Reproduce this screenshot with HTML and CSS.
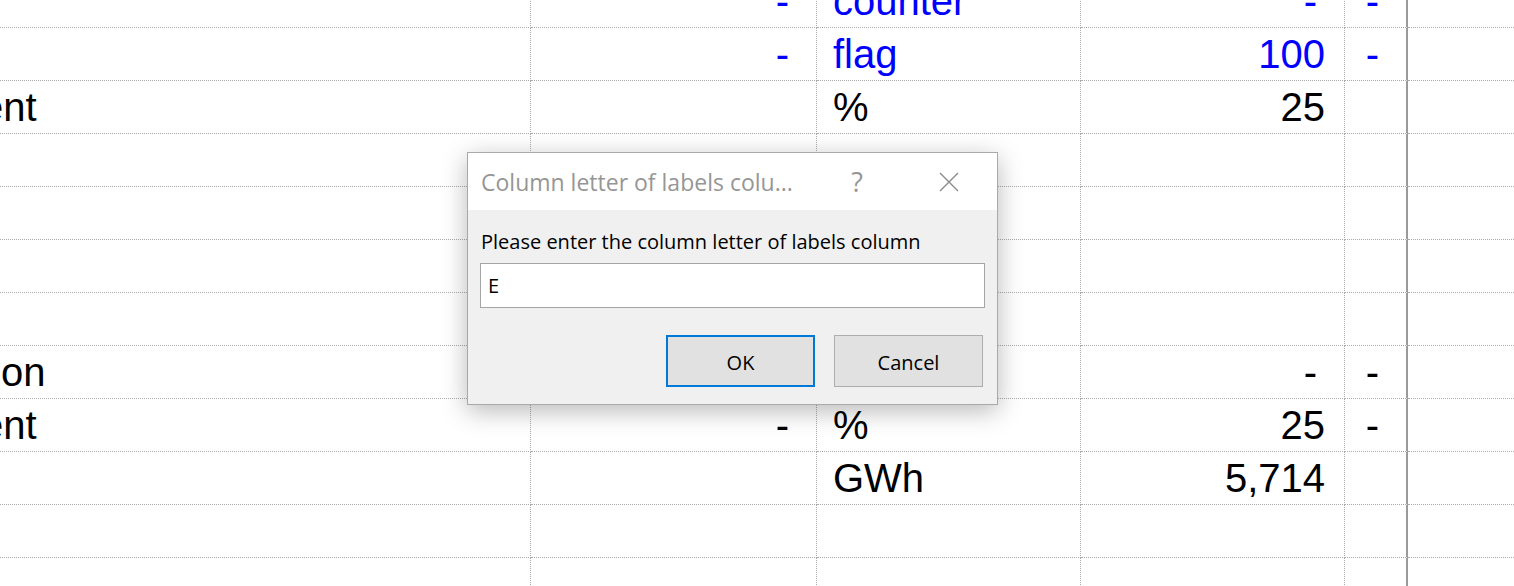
FILE: index.html
```html
<!DOCTYPE html>
<html lang="en">
<head>
<meta charset="utf-8">
<title>Column letter of labels column</title>
<link rel="stylesheet" href="styles.css">
</head>
<body>
<div class="viewport">
  <div class="sheet">
    <div class="cell ca"></div>
    <div class="cell cb dash blue">-</div>
    <div class="cell cc blue">counter</div>
    <div class="cell cd dash blue">-</div>
    <div class="cell ce dash blue">-</div>
    <div class="cell cf"></div>

    <div class="cell ca"></div>
    <div class="cell cb dash blue">-</div>
    <div class="cell cc blue">flag</div>
    <div class="cell cd blue">100</div>
    <div class="cell ce dash blue">-</div>
    <div class="cell cf"></div>

    <div class="cell ca">ent</div>
    <div class="cell cb"></div>
    <div class="cell cc">%</div>
    <div class="cell cd">25</div>
    <div class="cell ce"></div>
    <div class="cell cf"></div>

    <div class="cell ca"></div><div class="cell cb"></div><div class="cell cc"></div><div class="cell cd"></div><div class="cell ce"></div><div class="cell cf"></div>
    <div class="cell ca"></div><div class="cell cb"></div><div class="cell cc"></div><div class="cell cd"></div><div class="cell ce"></div><div class="cell cf"></div>
    <div class="cell ca"></div><div class="cell cb"></div><div class="cell cc"></div><div class="cell cd"></div><div class="cell ce"></div><div class="cell cf"></div>
    <div class="cell ca"></div><div class="cell cb"></div><div class="cell cc"></div><div class="cell cd"></div><div class="cell ce"></div><div class="cell cf"></div>

    <div class="cell ca">tion</div>
    <div class="cell cb"></div>
    <div class="cell cc"></div>
    <div class="cell cd dash">-</div>
    <div class="cell ce dash">-</div>
    <div class="cell cf"></div>

    <div class="cell ca">ent</div>
    <div class="cell cb dash">-</div>
    <div class="cell cc">%</div>
    <div class="cell cd">25</div>
    <div class="cell ce dash">-</div>
    <div class="cell cf"></div>

    <div class="cell ca"></div>
    <div class="cell cb"></div>
    <div class="cell cc">GWh</div>
    <div class="cell cd">5,714</div>
    <div class="cell ce"></div>
    <div class="cell cf"></div>

    <div class="cell ca"></div><div class="cell cb"></div><div class="cell cc"></div><div class="cell cd"></div><div class="cell ce"></div><div class="cell cf"></div>
    <div class="cell ca"></div><div class="cell cb"></div><div class="cell cc"></div><div class="cell cd"></div><div class="cell ce"></div><div class="cell cf"></div>
  </div>

  <div class="dialog">
    <div class="titlebar">
      <span class="title">Column letter of labels colu...</span>
      <span class="help">?</span>
      <svg class="close" width="20" height="20" viewBox="0 0 20 20" aria-hidden="true">
        <path d="M1 1 L19 19 M19 1 L1 19" stroke="#8c8c8c" stroke-width="1.4" fill="none"/>
      </svg>
    </div>
    <div class="dbody">
      <div class="prompt">Please enter the column letter of labels column</div>
      <div class="input">E</div>
      <div class="buttons">
        <div class="btn ok">OK</div>
        <div class="btn">Cancel</div>
      </div>
    </div>
  </div>
</div>
</body>
</html>
```

FILE: styles.css
```css
html, body {
  margin: 0;
  padding: 0;
  background: #ffffff;
}

.viewport {
  position: relative;
  width: 1514px;
  height: 586px;
  overflow: hidden;
  background: #ffffff;
}

.sheet {
  display: grid;
  grid-template-columns: 551px 286px 264px 264px 63px 300px;
  grid-auto-rows: 53px;
  margin: -25px 0 0 -20px;
  font-family: "Liberation Sans", Arial, sans-serif;
  font-size: 40px;
  line-height: 52px;
  color: #000000;
}

.cell {
  box-sizing: border-box;
  border-right: 1px dotted #ababab;
  border-bottom: 1px dotted #ababab;
  white-space: nowrap;
  overflow: hidden;
}

.ca { padding-left: 1px; }
.cb { text-align: right; }
.cc { padding-left: 16px; }
.cd { text-align: right; padding-right: 19px; }
.ce { text-align: right; border-right: 2px solid #9a9a9a; }

.dash { padding-right: 27px; }
.blue { color: #0000ff; }

/* dialog */
.dialog {
  position: absolute;
  left: 467px;
  top: 152px;
  width: 531px;
  height: 253px;
  box-sizing: border-box;
  border: 1px solid #a9a9a9;
  background: #f0f0f0;
  box-shadow: 0 6px 24px rgba(0, 0, 0, 0.28);
  font-family: "Open Sans", "Noto Sans", sans-serif;
  display: flex;
  flex-direction: column;
}

.titlebar {
  height: 57px;
  background: #ffffff;
  display: flex;
  align-items: center;
  padding: 0 38px 0 13px;
  color: #969696;
}

.title {
  flex: 1;
  font-size: 23px;
  white-space: nowrap;
}

.help {
  width: 20px;
  text-align: center;
  font-size: 27px;
  margin-right: 72px;
  color: #969696;
}

.close {
  display: block;
}

.dbody {
  flex: 1;
  padding: 20px 12px 0 12px;
  display: flex;
  flex-direction: column;
}

.prompt {
  font-size: 20px;
  line-height: 24px;
  padding-left: 1px;
  color: #000000;
  white-space: nowrap;
}

.input {
  margin-top: 9px;
  height: 45px;
  box-sizing: border-box;
  border: 1px solid #a5a5a5;
  background: #ffffff;
  padding-left: 7px;
  font-size: 20px;
  line-height: 44px;
  color: #000000;
}

.buttons {
  margin-top: 27px;
  display: flex;
  justify-content: flex-end;
  gap: 19px;
  padding-right: 2px;
}

.btn {
  width: 149px;
  height: 52px;
  box-sizing: border-box;
  border: 1px solid #adadad;
  background: #e1e1e1;
  font-size: 20px;
  line-height: 53px;
  text-align: center;
  color: #000000;
}

.btn.ok {
  border: 2px solid #0078d7;
  line-height: 51px;
}
```
